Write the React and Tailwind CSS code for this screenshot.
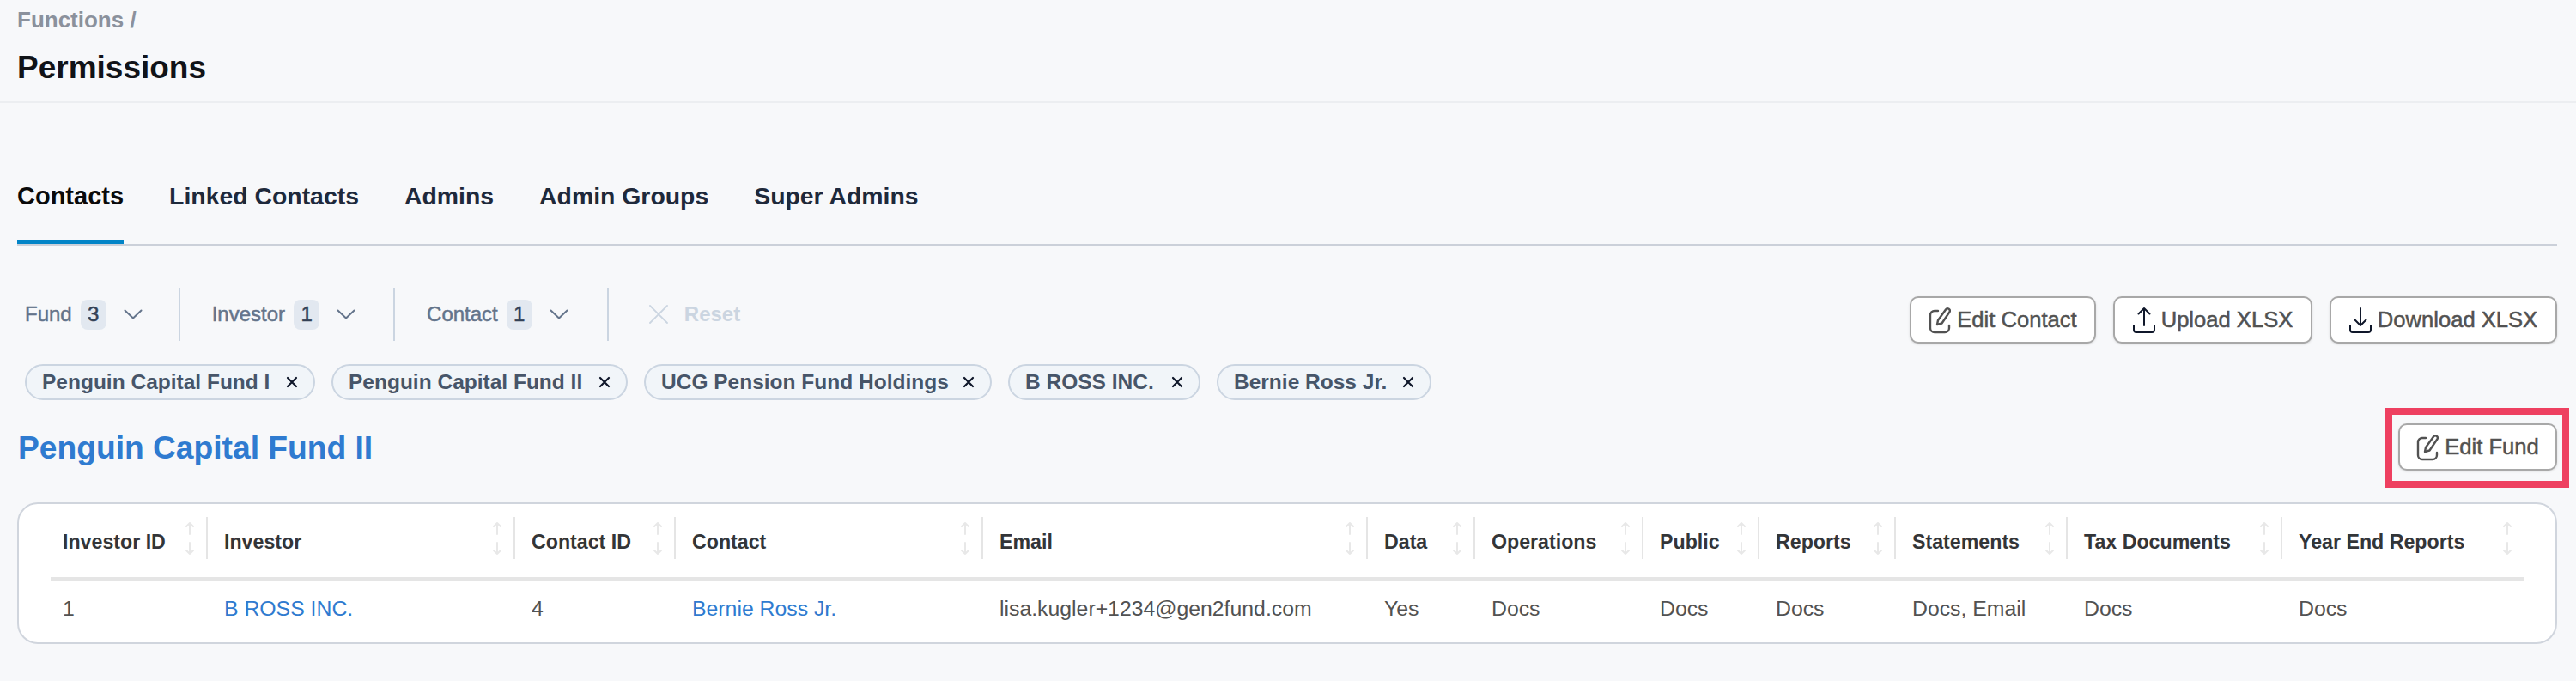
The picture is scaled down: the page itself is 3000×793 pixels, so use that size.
function EditIcon({ className = "" }) {
  return (
    <svg viewBox="0 0 26 32" className={className} fill="none" stroke="currentColor" strokeWidth="2.400" strokeLinecap="round" strokeLinejoin="round">
      <path d="M11 5H7a5 5 0 0 0-5 5v15a5 5 0 0 0 5 5h12a5 5 0 0 0 5-5v-3" />
      <path d="M10 21l1-5L20 3.500a2.600 2.600 0 0 1 4.300 3L15.500 19.500z" />
    </svg>
  );
}

function UploadIcon() {
  return (
    <svg viewBox="0 0 26 32" className="h-[32px] w-[26px] text-[#0f172a]" fill="none" stroke="currentColor" strokeWidth="2" strokeLinecap="round" strokeLinejoin="round">
      <path d="M13 22V2M6.500 8.500L13 2l6.500 6.500" />
      <path d="M1 22v5a3 3 0 0 0 3 3h18a3 3 0 0 0 3-3v-5" />
    </svg>
  );
}

function DownloadIcon() {
  return (
    <svg viewBox="0 0 26 32" className="h-[32px] w-[26px] text-[#0f172a]" fill="none" stroke="currentColor" strokeWidth="2" strokeLinecap="round" strokeLinejoin="round">
      <path d="M13 2v20M6.500 15.500L13 22l6.500-6.500" />
      <path d="M1 22v5a3 3 0 0 0 3 3h18a3 3 0 0 0 3-3v-5" />
    </svg>
  );
}

function Chevron() {
  return (
    <svg viewBox="0 0 22 12" className="h-[12px] w-[22px] text-[#64748b]" fill="none" stroke="currentColor" strokeWidth="2" strokeLinecap="round" strokeLinejoin="round">
      <path d="M1.500 1.500L11 10.500l9.500-9" />
    </svg>
  );
}

function SortIcon() {
  return (
    <svg viewBox="0 0 12 40" className="h-[40px] w-[12px] shrink-0 text-[#e8e8e8]" fill="none" stroke="currentColor" strokeWidth="2" strokeLinecap="round" strokeLinejoin="round">
      <path d="M6 15V2M2 6L6 2l4 4" />
      <path d="M6 25v13M2 34L6 38l4-4" />
    </svg>
  );
}

function ActionButton({ icon, label, className = "" }) {
  return (
    <button className={`flex h-[55px] items-center justify-center gap-[7px] rounded-[10px] border-2 border-[#a8a8a8] bg-white text-[25.600px] text-[#525252] shadow-sm [-webkit-text-stroke:0.5px_#525252] ${className}`}>
      {icon}
      <span>{label}</span>
    </button>
  );
}

function Filter({ label, count, className = "" }) {
  return (
    <div className={`flex h-[62px] items-center border-r-2 border-[#cbd5e1] text-[24px] text-[#64748b] [-webkit-text-stroke:0.5px_#64748b] ${className}`}>
      <span>{label}</span>
      <span className="ml-[10px] flex h-[35px] w-[30px] items-center justify-center rounded-[8px] bg-[#e2e8f0] text-[#334155] [-webkit-text-stroke:0.5px_#334155]">{count}</span>
      <span className="ml-[20px]"><Chevron /></span>
    </div>
  );
}

function Chip({ label, className = "" }) {
  return (
    <div className={`flex h-[42px] items-center justify-between rounded-full border-2 border-[#cbd5e1] bg-[#f1f5f9] pl-[18px] pr-[18px] text-[24.500px] font-bold text-[#475569] ${className}`}>
      <span>{label}</span>
      <svg viewBox="0 0 14 14" className="h-[14px] w-[14px] text-[#0f172a]" fill="none" stroke="currentColor" strokeWidth="2.200" strokeLinecap="round">
        <path d="M2 2l10 10M12 2L2 12" />
      </svg>
    </div>
  );
}

const columns = [
  { label: "Investor ID", value: "1", width: "w-[181px]" },
  { label: "Investor", value: "B ROSS INC.", link: true, width: "w-[358px]" },
  { label: "Contact ID", value: "4", width: "w-[187px]" },
  { label: "Contact", value: "Bernie Ross Jr.", link: true, width: "w-[358px]" },
  { label: "Email", value: "lisa.kugler+1234@gen2fund.com", width: "w-[448px]" },
  { label: "Data", value: "Yes", width: "w-[125px]" },
  { label: "Operations", value: "Docs", width: "w-[196px]" },
  { label: "Public", value: "Docs", width: "w-[135px]" },
  { label: "Reports", value: "Docs", width: "w-[159px]" },
  { label: "Statements", value: "Docs, Email", width: "w-[200px]" },
  { label: "Tax Documents", value: "Docs", width: "w-[250px]" },
  { label: "Year End Reports", value: "Docs", width: "w-[283px]" },
];

export default function App() {
  return (
    <div className="h-[793px] overflow-hidden bg-[#f7f8fa] font-['Liberation_Sans',Arial,sans-serif]">
      <header className="h-[120px] border-b-2 border-[#eceef1] pl-[20px] pt-[8px]">
        <div className="text-[26px] font-bold leading-[30px] text-[#8b919c]">Functions /</div>
        <h1 className="mt-[19px] text-[37px] font-bold leading-[44px] text-[#111318]">Permissions</h1>
      </header>

      <main className="pl-[20px] pr-[22px]">
        <nav className="mt-[90px] flex gap-[53px] border-b-2 border-[#cbd0d9] text-[28.400px] font-bold leading-[36px] text-[#1e293b]">
          <div className="border-b-4 border-[#0284c7] pb-[34px] text-[29px] text-[#0a0a0a]">Contacts</div>
          <div className="pb-[38px]">Linked Contacts</div>
          <div className="pb-[38px]">Admins</div>
          <div className="pb-[38px]">Admin Groups</div>
          <div className="pb-[38px]">Super Admins</div>
        </nav>

        <section className="mt-[49px] flex items-start justify-between pl-[9px]">
          <div className="flex items-center">
            <Filter label="Fund" count="3" className="pr-[42px]" />
            <Filter label="Investor" count="1" className="pl-[37px] pr-[44px]" />
            <Filter label="Contact" count="1" className="pl-[37px] pr-[45px]" />
            <div className="ml-[46px] flex items-center gap-[18px] text-[24px] font-bold text-[#cbd5e1]">
              <svg viewBox="0 0 24 24" className="h-[24px] w-[24px]" fill="none" stroke="currentColor" strokeWidth="1.800" strokeLinecap="round">
                <path d="M2 2l20 20M22 2L2 22" />
              </svg>
              <span>Reset</span>
            </div>
          </div>
          <div className="mt-[10px] flex gap-[20px]">
            <ActionButton className="w-[217px]" icon={<EditIcon className="h-[32px] w-[26px] text-[#525252]" />} label="Edit Contact" />
            <ActionButton className="w-[232px]" icon={<UploadIcon />} label="Upload XLSX" />
            <ActionButton className="w-[265px]" icon={<DownloadIcon />} label="Download XLSX" />
          </div>
        </section>

        <section className="mt-[24px] flex gap-[19px] pl-[9px]">
          <Chip label="Penguin Capital Fund I" className="w-[338px]" />
          <Chip label="Penguin Capital Fund II" className="w-[345px]" />
          <Chip label="UCG Pension Fund Holdings" className="w-[405px]" />
          <Chip label="B ROSS INC." className="w-[224px]" />
          <Chip label="Bernie Ross Jr." className="w-[250px]" />
        </section>

        <section className="mt-[27px] flex items-center justify-between">
          <h2 className="ml-px text-[37.200px] font-bold leading-[44px] text-[#2f7bd0]">Penguin Capital Fund II</h2>
          <div className="relative">
            <ActionButton className="w-[185px]" icon={<EditIcon className="h-[32px] w-[26px] text-[#525252]" />} label="Edit Fund" />
            <div className="pointer-events-none absolute -bottom-[20px] -left-[15px] -right-[14px] -top-[18px] border-[8px] border-[#ee4060]" />
          </div>
        </section>

        <section className="mt-[37px] h-[165px] rounded-[24px] border-2 border-[#d0d5dd] bg-white px-[37px] pt-[15px]">
          <table className="w-[2880px] table-fixed border-collapse">
            <colgroup>
              {columns.map((c) => (
                <col key={c.label} className={c.width} />
              ))}
            </colgroup>
            <thead>
              <tr className="border-b-[5px] border-[#e5e5e5]">
                {columns.map((c, i) => (
                  <th key={c.label} className="p-0 pb-[21px] text-left font-normal">
                    <div className={`flex h-[49px] items-center justify-between pr-[13px] text-[23.200px] font-bold text-[#333538] ${i === 0 ? "pl-[14px]" : "border-l-2 border-[#e5e5e5] pl-[19px]"}`}>
                      <span className="mt-[9px] whitespace-nowrap">{c.label}</span>
                      <SortIcon />
                    </div>
                  </th>
                ))}
              </tr>
            </thead>
            <tbody>
              <tr>
                {columns.map((c, i) => (
                  <td key={c.label} className={`h-[66px] whitespace-nowrap p-0 text-[24.800px] ${i === 0 ? "pl-[14px]" : "pl-[21px]"} ${c.link ? "text-[#2f7bd0]" : "text-[#525252]"}`}>
                    {c.value}
                  </td>
                ))}
              </tr>
            </tbody>
          </table>
        </section>
      </main>
    </div>
  );
}
